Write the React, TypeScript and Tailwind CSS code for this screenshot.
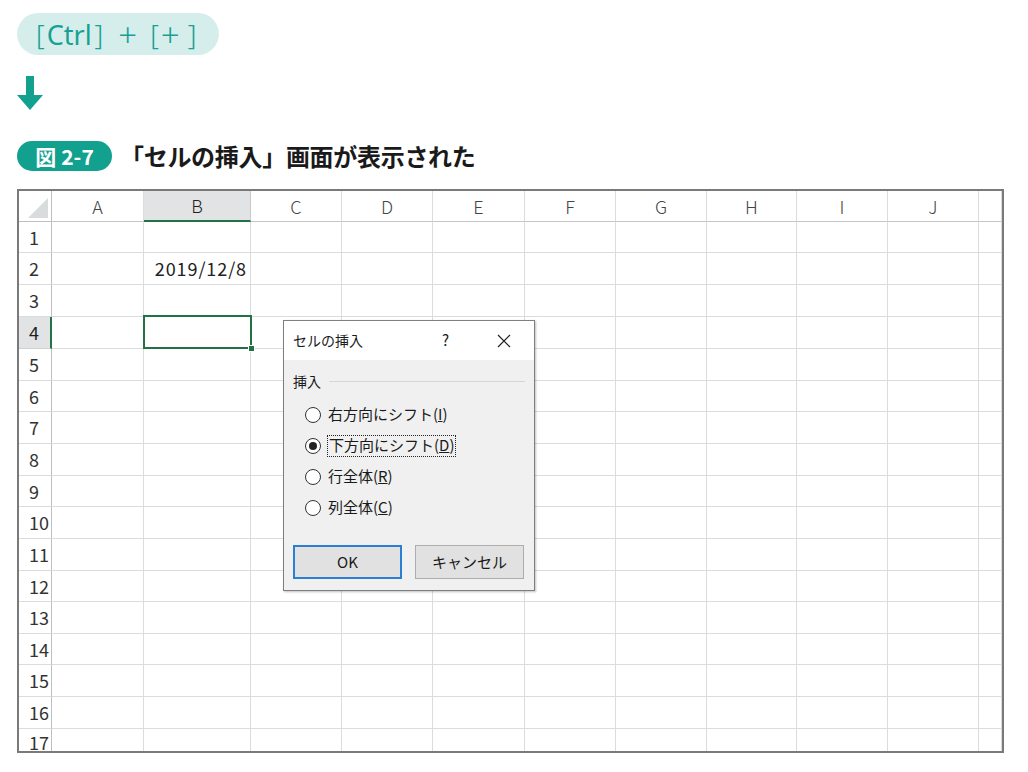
import React from "react";

const cols = ["A", "B", "C", "D", "E", "F", "G", "H", "I", "J", ""];
const rows = Array.from({ length: 17 }, (_, i) => i + 1);

const Radio = ({ checked, label, focus }: { checked?: boolean; label: React.ReactNode; focus?: boolean }) => (
  <div className="flex items-center h-[31px]">
    <div className="w-[16px] h-[16px] rounded-full border border-[#333] bg-white flex items-center justify-center">
      {checked && <div className="w-[8px] h-[8px] rounded-full bg-[#222]" />}
    </div>
    <div
      className={
        focus
          ? "ml-[6px] px-[1px] h-[22px] flex items-center border border-dotted border-[#222]"
          : "ml-[7px] h-[22px] flex items-center"
      }
    >
      {label}
    </div>
  </div>
);

const InsertDialog = () => (
  <div className="absolute left-[264px] top-[129px] w-[252px] h-[271px] border border-[#7f7f7f] bg-[#f0f0f0] shadow-[1px_1px_2px_rgba(0,0,0,0.25)] flex flex-col text-[#1a1a1a]">
    <div className="h-[39px] bg-white flex items-center pl-[9px] text-[14px]">
      <span>セルの挿入</span>
      <span className="ml-auto text-[15px]">?</span>
      <svg className="ml-[48px] mr-[23px]" width="14" height="14" viewBox="0 0 14 14">
        <path d="M1 1L13 13M13 1L1 13" stroke="#222" strokeWidth="1.2" />
      </svg>
    </div>
    <div className="flex-1 px-[9px] pt-[11px] text-[15px]">
      <div className="flex items-center">
        <span className="text-[14px]">挿入</span>
        <div className="flex-1 ml-[8px] h-px bg-[#d6d6d6]" />
      </div>
      <div className="pl-[12px] pt-[7px]">
        <Radio label={<span>右方向にシフト(<span className="underline">I</span>)</span>} />
        <Radio checked focus label={<span>下方向にシフト(<span className="underline">D</span>)</span>} />
        <Radio label={<span>行全体(<span className="underline">R</span>)</span>} />
        <Radio label={<span>列全体(<span className="underline">C</span>)</span>} />
      </div>
      <div className="flex justify-between mt-[22px] pr-[1px]">
        <div className="w-[109px] h-[34px] border-2 border-[#2a7fd4] bg-[#e1e1e1] flex items-center justify-center text-[15px]">
          OK
        </div>
        <div className="w-[109px] h-[34px] border border-[#adadad] bg-[#e1e1e1] flex items-center justify-center text-[15px]">
          キャンセル
        </div>
      </div>
    </div>
  </div>
);

const Sheet = () => (
  <div className="relative mt-[18px] w-[987px] h-[564px] border-2 border-[#7a7a7a] bg-white overflow-hidden">
    <div className="grid grid-cols-[33px_92px_107px_91px_91px_92px_91px_91px_90px_91px_91px_1fr] grid-rows-[31px_31px_32px_32px_32px_32px_31px_32px_32px_31px_32px_32px_31px_32px_31px_32px_32px_1fr] h-full">
      <div className="border-r border-b border-[#bfbfbf] bg-white relative">
        <svg className="absolute right-[3px] bottom-[3px]" width="20" height="20" viewBox="0 0 20 20">
          <path d="M20 0L20 20L0 20Z" fill="#d9dcdd" />
        </svg>
      </div>
      {cols.map((c) => (
        <div
          key={c || "k"}
          className={
            c === "B"
              ? "bg-[#e1e3e5] border-r border-[#c8c8c8] border-b-2 border-b-[#217346] flex items-center justify-center text-[18px] font-light text-[#1f1f1f]"
              : "bg-white border-r border-[#dcdcdc] border-b border-b-[#c6c6c6] flex items-center justify-center text-[18px] font-light text-[#444]"
          }
        >
          {c}
        </div>
      ))}
      {rows.map((r) => (
        <React.Fragment key={r}>
          <div
            className={
              r === 4
                ? "bg-[#e1e3e5] border-b border-[#d0d0d0] border-r-2 border-r-[#217346] flex items-center pl-[10px] text-[18px] text-[#1f1f1f]"
                : "bg-white border-b border-[#dcdcdc] border-r border-r-[#bfbfbf] flex items-center pl-[10px] text-[18px] text-[#333]"
            }
          >
            {r}
          </div>
          {cols.map((c) => (
            <div
              key={c || "k"}
              className="border-r border-b border-[#dadcde] flex items-center justify-end pr-[3px] text-[18px] tracking-[0.9px] text-[#222]"
            >
              {r === 2 && c === "B" ? "2019/12/8" : ""}
            </div>
          ))}
        </React.Fragment>
      ))}
    </div>
    <div className="absolute left-[124px] top-[124px] w-[109px] h-[34px] border-2 border-[#217346]" />
    <div className="absolute left-[229px] top-[154px] w-[7px] h-[7px] bg-[#217346] border border-white" />
    <InsertDialog />
  </div>
);

export default function App() {
  return (
    <div className="w-[1028px] h-[772px] bg-white pl-[17px] pt-[13px] font-['Noto_Sans_CJK_JP','Noto_Sans',sans-serif]">
      <div className="w-[202px] h-[42px] rounded-full bg-[#d5eeec] flex items-center pl-[19px] text-[27px] leading-none text-[#17a093] whitespace-nowrap font-['Noto_Sans',sans-serif]">
        <span className="font-light">[</span>
        <span className="ml-[2px]">Ctrl</span>
        <span className="ml-[3px] font-light">]</span>
        <span className="ml-[15px] text-[33px] font-light">+</span>
        <span className="ml-[13px] font-light">[</span>
        <span className="ml-[2px] text-[33px] font-light">+</span>
        <span className="ml-[8px] font-light">]</span>
      </div>
      <svg className="mt-[21px]" width="26" height="34" viewBox="0 0 26 34">
        <rect x="9" y="0" width="8" height="20" fill="#12a08f" />
        <path d="M0 19H26L13 34Z" fill="#12a08f" />
      </svg>
      <div className="flex items-center mt-[31px] h-[30px]">
        <div className="w-[95px] h-[30px] rounded-full bg-[#12a08f] flex items-center justify-center text-white font-bold text-[21px] leading-none">
          図<span className="ml-[5px]">2-7</span>
        </div>
        <div className="ml-[8px] text-[24px] font-bold text-[#1a1a1a] tracking-[-0.3px]">
          「セルの挿入」画面が表示された
        </div>
      </div>
      <Sheet />
    </div>
  );
}
